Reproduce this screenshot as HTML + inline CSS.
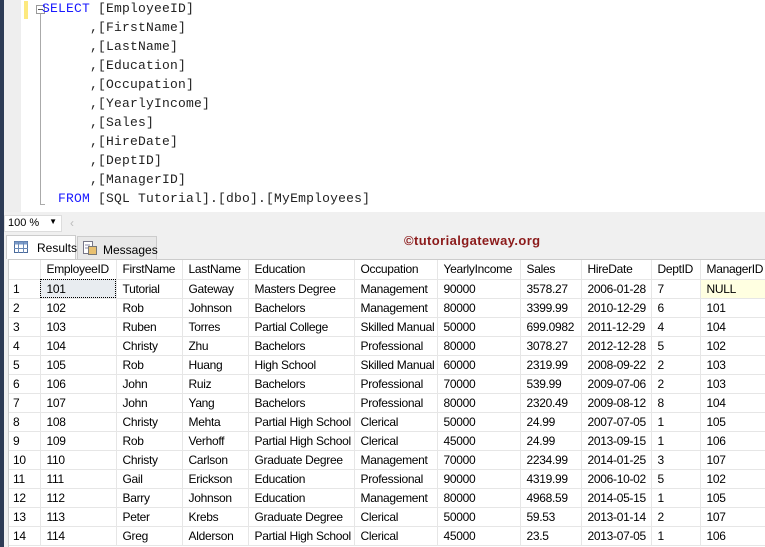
<!DOCTYPE html>
<html><head><style>
*{margin:0;padding:0;box-sizing:border-box}
body{width:765px;height:547px;overflow:hidden;background:#f0f0f0;position:relative;font-family:"Liberation Sans",sans-serif}
#strip{position:absolute;left:0;top:0;width:4px;height:547px;background:#2d3b55}
#ed{position:absolute;left:4px;top:0;width:761px;height:212px;background:#fff}
#gut{position:absolute;left:0;top:0;width:17px;height:212px;background:#eeeeee}
#yb{position:absolute;left:20px;top:1px;width:4px;height:18px;background:#fde97f}
.code{position:absolute;font-family:"Liberation Mono",monospace;font-size:13px;letter-spacing:0.2px;color:#222;white-space:pre;line-height:19px}
.kw{color:#1a1aff}
#fold{position:absolute;left:32px;top:5px;width:9px;height:9px;border:1px solid #999;background:#fff}
#fold:after{content:"";position:absolute;left:1px;top:3px;width:5px;height:1px;background:#555}
#fl{position:absolute;left:36px;top:14px;width:1px;height:191px;background:#aaa}
#fl2{position:absolute;left:36px;top:204px;width:5px;height:1px;background:#aaa}
#zoom{position:absolute;left:4px;top:215px;width:58px;height:17px;background:#fff;border:1px solid #ddd;font-size:11px;padding:1px 3px;color:#000}
#tabs{position:absolute;left:4px;top:233px;width:761px;height:26px;background:#f0f0f0}
.tab{position:absolute;top:3px;height:23px;font-size:12px;padding:4px 0 0 0;color:#000}
#grid{position:absolute;left:8px;top:259px;width:757px;height:288px;background:#fff;border-left:1px solid #ccc;border-top:1px solid #ccc}
table{border-collapse:collapse;table-layout:fixed;width:756px;font-size:12px;position:absolute;left:0;top:0;letter-spacing:-0.3px}
td{height:19px;border-right:1px solid #e6e6e6;border-bottom:1px solid #e6e6e6;padding:0 0 0 6px;white-space:nowrap;overflow:hidden;color:#000}
td:first-child{padding-left:4px}
</style></head><body>
<div id="strip"></div>
<div id="ed">
<div id="gut"></div><div id="yb"></div>
<div id="fold"></div><div id="fl"></div><div id="fl2"></div>
<div class="code" style="left:38px;top:-1px"><span class="kw">SELECT</span> [EmployeeID]
      ,[FirstName]
      ,[LastName]
      ,[Education]
      ,[Occupation]
      ,[YearlyIncome]
      ,[Sales]
      ,[HireDate]
      ,[DeptID]
      ,[ManagerID]
  <span class="kw">FROM</span> [SQL Tutorial].[dbo].[MyEmployees]</div>
</div>
<div id="zoom">100 % <span style="position:absolute;right:4px;top:1px;font-size:8px">▼</span></div>
<div style="position:absolute;left:70px;top:216px;color:#bbb;font-size:12px">‹</div>
<div id="tabs">
<div class="tab" style="left:2px;width:70px;background:#fff;border:1px solid #ccc;border-bottom:none;top:2px;height:24px">
<svg style="position:absolute;left:7px;top:5px" width="14" height="12"><rect x="0.5" y="0.5" width="13" height="11" fill="#fff" stroke="#4a6a9a"/><rect x="0.5" y="0.5" width="13" height="3" fill="#7a9ac8"/><path d="M0 7.5H14M4.5 0V12M9.5 0V12" stroke="#6a8ab8"/></svg>
<span style="position:absolute;left:30px;top:5px">Results</span></div>
<div class="tab" style="left:73px;width:80px;border:1px solid #ccc;border-bottom:none;background:#e8e8e8">
<svg style="position:absolute;left:4px;top:3px" width="16" height="16"><rect x="1.5" y="1.5" width="9" height="12" fill="#fff" stroke="#778"/><rect x="6.5" y="6.5" width="8" height="8" fill="#e8c070" stroke="#777"/><path d="M3 5h5M3 8h3" stroke="#88a"/></svg>
<span style="position:absolute;left:25px;top:6px">Messages</span></div>
<div style="position:absolute;left:400px;top:0px;font-size:13px;font-weight:bold;color:#8b1a1a;letter-spacing:0.4px">©tutorialgateway.org</div>
</div>
<div id="grid"><table>
<colgroup><col style="width:31px"><col style="width:76px"><col style="width:66px"><col style="width:66px"><col style="width:106px"><col style="width:83px"><col style="width:83px"><col style="width:61px"><col style="width:70px"><col style="width:49px"><col style="width:65px"></colgroup>
<tr><td></td><td>EmployeeID</td><td>FirstName</td><td>LastName</td><td>Education</td><td>Occupation</td><td>YearlyIncome</td><td>Sales</td><td>HireDate</td><td>DeptID</td><td>ManagerID</td></tr>
<tr><td>1</td><td style="background:#e8ecf0;outline:1px dotted #000;outline-offset:-1px">101</td><td>Tutorial</td><td>Gateway</td><td>Masters Degree</td><td>Management</td><td>90000</td><td>3578.27</td><td>2006-01-28</td><td>7</td><td style="background:#ffffe1">NULL</td></tr>
<tr><td>2</td><td>102</td><td>Rob</td><td>Johnson</td><td>Bachelors</td><td>Management</td><td>80000</td><td>3399.99</td><td>2010-12-29</td><td>6</td><td>101</td></tr>
<tr><td>3</td><td>103</td><td>Ruben</td><td>Torres</td><td>Partial College</td><td>Skilled Manual</td><td>50000</td><td>699.0982</td><td>2011-12-29</td><td>4</td><td>104</td></tr>
<tr><td>4</td><td>104</td><td>Christy</td><td>Zhu</td><td>Bachelors</td><td>Professional</td><td>80000</td><td>3078.27</td><td>2012-12-28</td><td>5</td><td>102</td></tr>
<tr><td>5</td><td>105</td><td>Rob</td><td>Huang</td><td>High School</td><td>Skilled Manual</td><td>60000</td><td>2319.99</td><td>2008-09-22</td><td>2</td><td>103</td></tr>
<tr><td>6</td><td>106</td><td>John</td><td>Ruiz</td><td>Bachelors</td><td>Professional</td><td>70000</td><td>539.99</td><td>2009-07-06</td><td>2</td><td>103</td></tr>
<tr><td>7</td><td>107</td><td>John</td><td>Yang</td><td>Bachelors</td><td>Professional</td><td>80000</td><td>2320.49</td><td>2009-08-12</td><td>8</td><td>104</td></tr>
<tr><td>8</td><td>108</td><td>Christy</td><td>Mehta</td><td>Partial High School</td><td>Clerical</td><td>50000</td><td>24.99</td><td>2007-07-05</td><td>1</td><td>105</td></tr>
<tr><td>9</td><td>109</td><td>Rob</td><td>Verhoff</td><td>Partial High School</td><td>Clerical</td><td>45000</td><td>24.99</td><td>2013-09-15</td><td>1</td><td>106</td></tr>
<tr><td>10</td><td>110</td><td>Christy</td><td>Carlson</td><td>Graduate Degree</td><td>Management</td><td>70000</td><td>2234.99</td><td>2014-01-25</td><td>3</td><td>107</td></tr>
<tr><td>11</td><td>111</td><td>Gail</td><td>Erickson</td><td>Education</td><td>Professional</td><td>90000</td><td>4319.99</td><td>2006-10-02</td><td>5</td><td>102</td></tr>
<tr><td>12</td><td>112</td><td>Barry</td><td>Johnson</td><td>Education</td><td>Management</td><td>80000</td><td>4968.59</td><td>2014-05-15</td><td>1</td><td>105</td></tr>
<tr><td>13</td><td>113</td><td>Peter</td><td>Krebs</td><td>Graduate Degree</td><td>Clerical</td><td>50000</td><td>59.53</td><td>2013-01-14</td><td>2</td><td>107</td></tr>
<tr><td>14</td><td>114</td><td>Greg</td><td>Alderson</td><td>Partial High School</td><td>Clerical</td><td>45000</td><td>23.5</td><td>2013-07-05</td><td>1</td><td>106</td></tr>
</table></div>
</body></html>
